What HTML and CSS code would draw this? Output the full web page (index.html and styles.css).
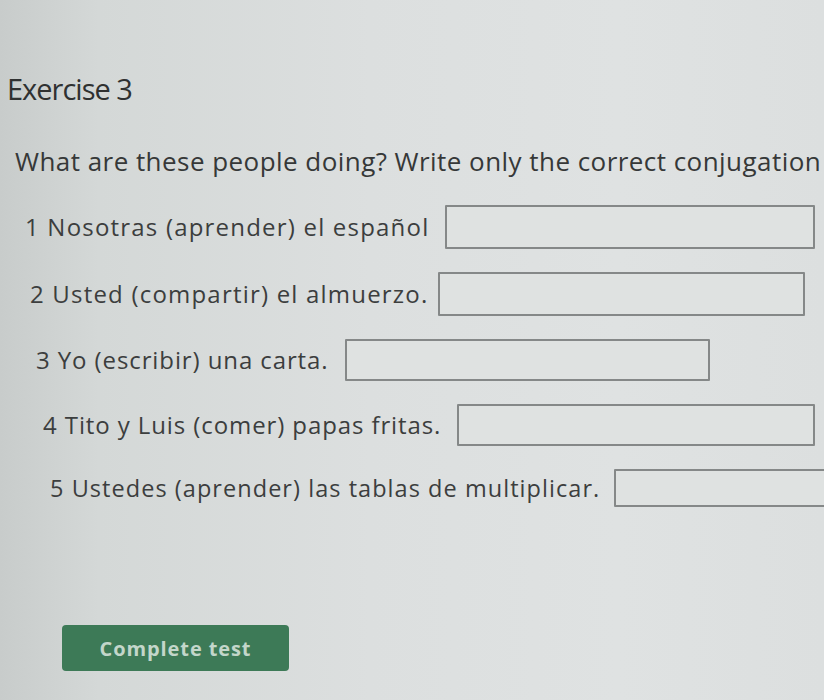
FILE: index.html
```html
<!DOCTYPE html>
<html lang="en">
<head>
<meta charset="utf-8">
<title>Exercise 3</title>
<link rel="stylesheet" href="styles.css">
</head>
<body>
<main class="page">
  <h1 class="title">Exercise 3</h1>
  <p class="question">What are these people doing? Write only the correct conjugation</p>
  <div class="rows">
    <div class="row r1"><span class="label">1 Nosotras (aprender) el español</span><input class="answer w1" type="text"></div>
    <div class="row r2"><span class="label">2 Usted (compartir) el almuerzo.</span><input class="answer w2" type="text"></div>
    <div class="row r3"><span class="label">3 Yo (escribir) una carta.</span><input class="answer w3" type="text"></div>
    <div class="row r4"><span class="label">4 Tito y Luis (comer) papas fritas.</span><input class="answer w4" type="text"></div>
    <div class="row r5"><span class="label">5 Ustedes (aprender) las tablas de multiplicar.</span><input class="answer w5" type="text"></div>
  </div>
  <button class="submit" type="button">Complete test</button>
</main>
</body>
</html>
```

FILE: styles.css
```css
html, body {
  margin: 0;
  padding: 0;
}
body {
  width: 824px;
  height: 700px;
  overflow: hidden;
  font-family: "Open Sans", "DejaVu Sans", sans-serif;
  color: #3b3d3d;
  background: linear-gradient(90deg, #c8cccb 0%, #d4d8d7 12%, #dcdfdf 45%, #dfe2e2 75%, #dcdfdf 100%);
}
.page {
  padding-top: 70px;
  display: flex;
  flex-direction: column;
  align-items: flex-start;
}
.title {
  margin: 0 0 0 7px;
  font-size: 29px;
  line-height: 38px;
  font-weight: 400;
  letter-spacing: -1px;
  color: #2f3131;
}
.question {
  margin: 36px 0 0 15px;
  font-size: 26px;
  line-height: 34px;
  white-space: nowrap;
  letter-spacing: 0.45px;
  color: #363838;
}
.rows {
  margin-top: 27px;
  display: flex;
  flex-direction: column;
  gap: 23px;
}
.row {
  display: flex;
  align-items: center;
  gap: 16px;
  white-space: nowrap;
}
.label {
  font-size: 24px;
  line-height: 32px;
  letter-spacing: 0.9px;
  color: #3c3e3e;
}
.answer {
  box-sizing: border-box;
  height: 44px;
  border: 2px solid #858888;
  border-radius: 1px;
  background: #dfe2e1;
  padding: 0 8px;
  font: inherit;
}
.r1 { margin-left: 25px; }
.r2 { margin-left: 30px; gap: 10px; }
.r3 { margin-left: 36px; }
.r4 { margin-left: 43px; }
.r5 { margin-left: 50px; gap: 14px; }
.r1 .label, .r2 .label { letter-spacing: 1.2px; }
.r5 .label { font-size: 23.5px; letter-spacing: 1.05px; }
.r3 .answer, .r4 .answer { height: 42px; }
.r5 .answer { height: 38px; }
.w1 { width: 370px; }
.w2 { width: 367px; }
.w3 { width: 365px; }
.w4 { width: 358px; }
.w5 { width: 240px; }
.submit {
  margin: 118px 0 0 62px;
  width: 227px;
  height: 46px;
  border: none;
  border-radius: 4px;
  background: #3d7a57;
  color: #c3d6ca;
  font-family: "Open Sans", "DejaVu Sans", sans-serif;
  font-size: 20px;
  font-weight: 700;
  letter-spacing: 0.9px;
  cursor: pointer;
}
```
